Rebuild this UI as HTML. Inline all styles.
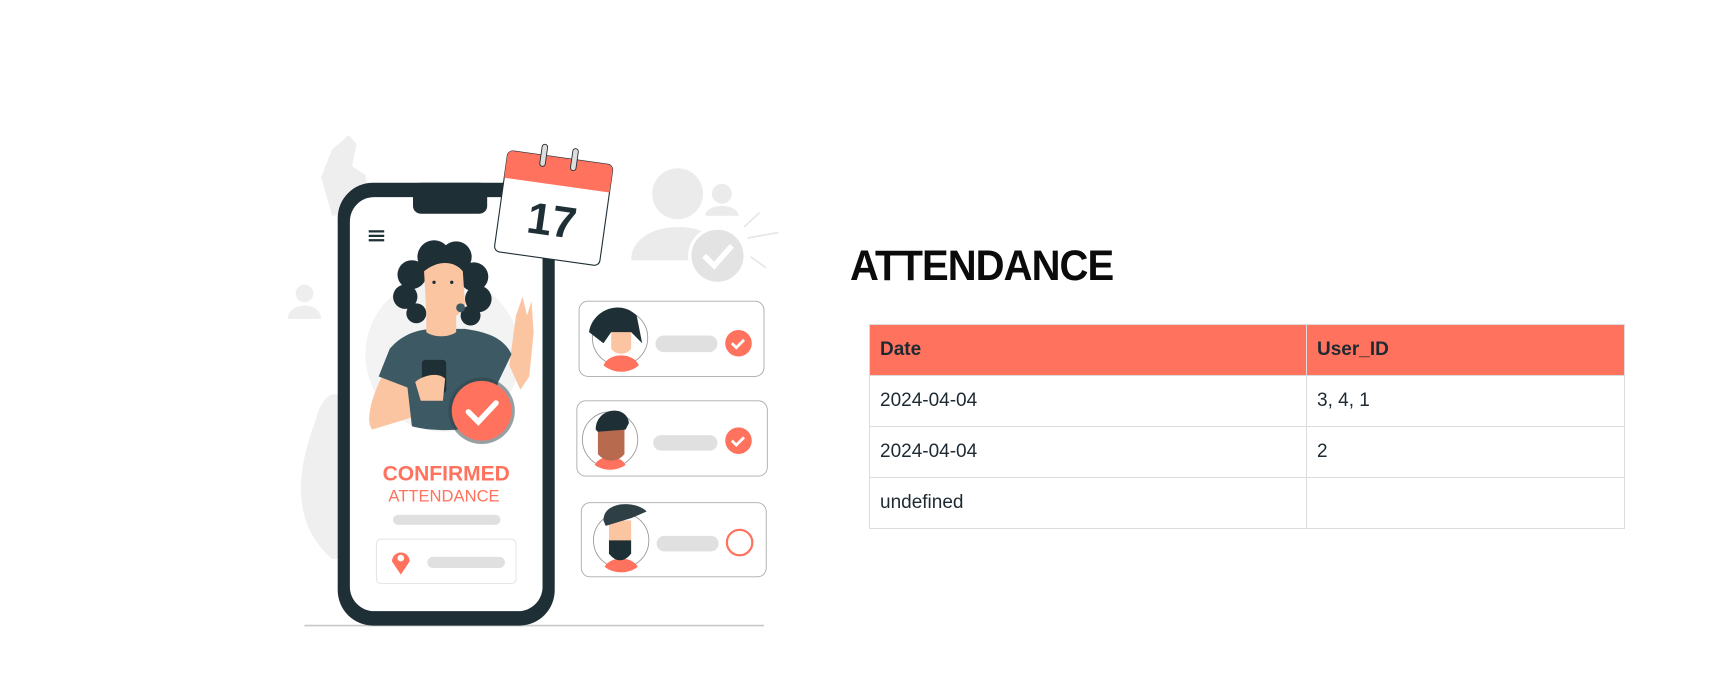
<!DOCTYPE html>
<html><head><meta charset="utf-8"><style>
html,body{margin:0;padding:0;background:#fff;width:1735px;height:692px;overflow:hidden;font-family:"Liberation Sans",sans-serif}
svg.ill{position:absolute;left:0;top:0}
h1{position:absolute;left:850px;top:242px;margin:0;font-size:43px;font-weight:bold;color:#0b0b0b;letter-spacing:-1px;transform:scaleX(0.93);transform-origin:left top}
table{position:absolute;left:869px;top:324px;width:756px;border-collapse:collapse;font-size:19px;color:#1d2a31}
td,th{border:1px solid #dcdcdc;height:50px;padding:0 10px;text-align:left;vertical-align:middle}
th{background:#ff725e;font-weight:bold;height:50px}
th:first-child,td:first-child{width:416px}
</style></head><body>
<svg class="ill" width="1735" height="692" viewBox="0 0 1567 625">
<line x1="275" y1="565" x2="690" y2="565" stroke="#c8c8c8" stroke-width="1.5"/>
<path d="M290 160 L300 135 L315 122 L322 130 L318 150 L330 158 L335 190 L300 195 Z" fill="#eeeeee"/>
<path d="M285 380 C270 420 260 470 300 505 L310 505 L310 360 C300 350 290 360 285 380Z" fill="#efefef"/>
<circle cx="275" cy="265" r="8" fill="#eeeeee"/><path d="M260 288 C260 272 290 272 290 288Z" fill="#eeeeee"/>
<circle cx="612" cy="175" r="23" fill="#ebebeb"/><path d="M570 235 C570 195 655 195 655 235Z" fill="#ebebeb"/>
<circle cx="652" cy="175" r="9" fill="#ebebeb"/><path d="M637 195 C637 183 667 183 667 195Z" fill="#ebebeb"/>
<circle cx="648" cy="231" r="25" fill="#e3e3e3" stroke="#fff" stroke-width="3"/>
<path d="M636 231 L645 240 L661 222" stroke="#fff" stroke-width="5" fill="none"/>
<path d="M672 205 L686 192 M675 215 L703 210 M678 232 L692 242" stroke="#e6e6e6" stroke-width="1.5"/>
<rect x="305" y="165" width="196" height="400" rx="32" fill="#1f2f36"/>
<rect x="316" y="178" width="174" height="374" rx="22" fill="#fff"/>
<rect x="373" y="165" width="67" height="28" rx="7" fill="#1f2f36"/>
<path d="M333 209h14M333 213h14M333 217h14" stroke="#1f2f36" stroke-width="2"/>
<circle cx="400" cy="320" r="70" fill="#f3f3f3"/>
<path d="M345 340 C335 360 330 380 336 388 L395 370 L395 350 Z" fill="#fbc5a1"/>
<path d="M466 285 L472 268 L476 285 L480 272 L482 300 L478 340 L470 352 L460 330 Z" fill="#fbc5a1"/>
<path d="M352 315 C365 300 380 297 395 297 L420 297 C440 300 455 305 462 320 L450 345 L440 382 C420 390 390 390 372 385 L368 350 L342 340 Z" fill="#3d5a64"/>
<path d="M385 283 L412 283 L412 300 C405 305 392 305 385 300Z" fill="#fbc5a1"/>
<g fill="#1f2f36">
<circle cx="392" cy="232" r="15"/><circle cx="412" cy="232" r="14"/><circle cx="372" cy="248" r="13"/><circle cx="428" cy="250" r="13"/>
<circle cx="366" cy="268" r="11"/><circle cx="432" cy="270" r="12"/><circle cx="376" cy="283" r="9"/><circle cx="425" cy="285" r="9"/>
</g>
<path d="M383 245 C395 235 410 235 418 245 L420 275 C415 290 395 292 385 282 Z" fill="#fbc5a1"/>
<circle cx="392" cy="255" r="1.5" fill="#1f2f36"/><circle cx="408" cy="255" r="1.5" fill="#1f2f36"/>
<circle cx="416" cy="278" r="4" fill="#3d5a64"/>
<rect x="381" y="325" width="22" height="30" rx="3" fill="#1f2f36"/>
<path d="M375 345 C380 340 395 335 402 342 L400 362 L380 362Z" fill="#fbc5a1"/>
<circle cx="435" cy="371" r="30" fill="#2e3f45" opacity=".5"/>
<circle cx="435" cy="371" r="27" fill="#ff725e"/>
<path d="M423 372 L432 381 L448 364" stroke="#fff" stroke-width="5" fill="none" stroke-linecap="round"/>
<text x="403" y="434" text-anchor="middle" font-family="Liberation Sans" font-weight="bold" font-size="19" fill="#ff725e">CONFIRMED</text>
<text x="401" y="453" text-anchor="middle" font-family="Liberation Sans" font-size="15" fill="#ff725e">ATTENDANCE</text>
<rect x="355" y="465" width="97" height="9" rx="4.5" fill="#e0e0e0"/>
<rect x="340" y="487" width="126" height="40" rx="4" fill="#fff" stroke="#e6e6e6"/>
<path d="M362 519 L354 507 A8 8 0 1 1 370 507 Z" fill="#ff725e"/><circle cx="362" cy="504" r="3" fill="#fff"/>
<rect x="386" y="503" width="70" height="10" rx="5" fill="#e0e0e0"/>
<g transform="rotate(8 500 188)">
<rect x="452" y="142" width="96" height="92" rx="5" fill="#fff" stroke="#1f2f36" stroke-width="1"/>
<path d="M452 147 a5 5 0 0 1 5 -5 h86 a5 5 0 0 1 5 5 v20 h-96z" fill="#ff725e"/>
<rect x="482" y="132" width="5" height="20" rx="2.5" fill="#ddd" stroke="#1f2f36" stroke-width=".8"/>
<rect x="510" y="132" width="5" height="20" rx="2.5" fill="#ddd" stroke="#1f2f36" stroke-width=".8"/>
<text x="500" y="213" text-anchor="middle" font-family="Liberation Sans" font-weight="bold" font-size="40" fill="#1f2f36">17</text>
</g>
<g>
<rect x="523" y="272" width="167" height="68" rx="8" fill="#fff" stroke="#aaa" stroke-width=".8"/>
<circle cx="560" cy="305" r="25" fill="#fff" stroke="#999" stroke-width=".8"/>
<path d="M545 330 C550 318 572 318 577 330 A25 25 0 0 1 545 330Z" fill="#ff725e"/>
<path d="M552 295 h18 v20 c-4 6 -14 6 -18 0z" fill="#fbc5a1"/>
<path d="M532 300 C535 280 560 270 575 285 L580 310 L570 300 L552 300 L545 310Z" fill="#1f2f36"/>
<rect x="592" y="303" width="56" height="15" rx="7.5" fill="#e0e0e0"/>
<circle cx="667" cy="310" r="12" fill="#ff725e"/><path d="M661 310 l4 4 l7 -7" stroke="#fff" stroke-width="2.5" fill="none"/>
</g>
<g>
<rect x="521" y="362" width="172" height="68" rx="8" fill="#fff" stroke="#aaa" stroke-width=".8"/>
<circle cx="551" cy="397" r="25" fill="#fff" stroke="#999" stroke-width=".8"/>
<path d="M537 420 C542 410 560 410 565 420 A25 25 0 0 1 537 420Z" fill="#ff725e"/>
<path d="M540 385 h24 v25 c-6 8 -18 8 -24 0z" fill="#b86a4f"/>
<path d="M538 388 C538 368 566 365 568 382 L565 388 L540 390Z" fill="#1f2f36"/>
<rect x="590" y="393" width="58" height="14" rx="7" fill="#e0e0e0"/>
<circle cx="667" cy="398" r="12" fill="#ff725e"/><path d="M661 398 l4 4 l7 -7" stroke="#fff" stroke-width="2.5" fill="none"/>
</g>
<g>
<rect x="525" y="454" width="167" height="67" rx="8" fill="#fff" stroke="#aaa" stroke-width=".8"/>
<circle cx="561" cy="488" r="25" fill="#fff" stroke="#999" stroke-width=".8"/>
<path d="M546 512 C551 502 571 502 576 512 A25 25 0 0 1 546 512Z" fill="#ff725e"/>
<path d="M550 470 h20 v30 c-6 6 -14 6 -20 0z" fill="#fbc5a1"/>
<path d="M550 488 h20 v12 c-6 8 -14 8 -20 0z" fill="#1f2f36"/>
<path d="M545 470 C545 452 575 452 584 462 L570 468 L547 475Z" fill="#2e3f45"/>
<rect x="593" y="484" width="56" height="14" rx="7" fill="#e0e0e0"/>
<circle cx="668" cy="490" r="11.5" fill="none" stroke="#ff725e" stroke-width="2"/>
</g>
</svg>
<h1>ATTENDANCE</h1>
<table>
<tr><th>Date</th><th>User_ID</th></tr>
<tr><td>2024-04-04</td><td>3, 4, 1</td></tr>
<tr><td>2024-04-04</td><td>2</td></tr>
<tr><td>undefined</td><td></td></tr>
</table>
</body></html>
